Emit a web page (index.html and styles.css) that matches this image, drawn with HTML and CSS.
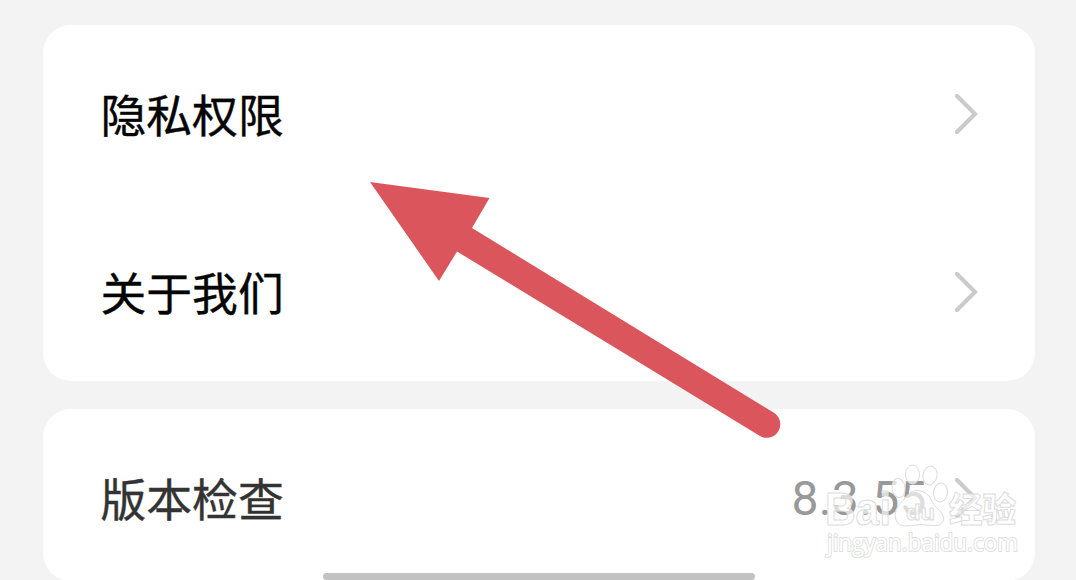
FILE: index.html
```html
<!DOCTYPE html>
<html lang="zh-CN">
<head>
<meta charset="utf-8">
<title>设置</title>
<link rel="stylesheet" href="styles.css">
</head>
<body>
<main class="screen">
  <section class="card">
    <div class="row">
      <span class="label">隐私权限</span>
      <svg class="chevron" viewBox="0 0 24 40"><path d="M2 2 20 20 2 38"/></svg>
    </div>
    <div class="row">
      <span class="label">关于我们</span>
      <svg class="chevron" viewBox="0 0 24 40"><path d="M2 2 20 20 2 38"/></svg>
    </div>
  </section>
  <section class="card card-last">
    <div class="row row-version">
      <span class="label label-soft">版本检查</span>
      <span class="version">8.3.55</span>
      <svg class="chevron" viewBox="0 0 24 40"><path d="M2 2 20 20 2 38"/></svg>
    </div>
  </section>
</main>
<div class="home-bar"></div>
<svg class="arrow" viewBox="0 0 1076 580">
  <path d="M370 182 489.500 198 472 228 773.500 412.500A13.500 13.500 0 0 1 760 436L457 251.500 439 281Z"/>
</svg>
<svg class="watermark" viewBox="820 455 210 110">
  <g class="mark">
    <text class="mark-latin" x="825" y="525" textLength="66" lengthAdjust="spacingAndGlyphs">Bai</text>
    <ellipse cx="898.500" cy="488" rx="6.500" ry="9.500" transform="rotate(-8 898.500 488)"/>
    <ellipse cx="912.500" cy="474.500" rx="7" ry="9.500"/>
    <ellipse cx="930" cy="475.500" rx="7" ry="9.500" transform="rotate(10 930 475.500)"/>
    <ellipse cx="940.500" cy="492.500" rx="7" ry="9.500" transform="rotate(8 940.500 492.500)"/>
    <path d="M905 498C909 492 915 489 921 491C930 493 930 500 935 506C941 512 945 516 943 521C940 528 931 525 920 524.500C908 526 899 528 896 520C893 509 899 506 905 498Z"/>
    <text class="mark-du" x="906" y="520" textLength="29" lengthAdjust="spacingAndGlyphs">du</text>
    <text class="mark-han" x="949" y="522" textLength="67" lengthAdjust="spacingAndGlyphs">经验</text>
    <text class="mark-url" x="827" y="551" textLength="191" lengthAdjust="spacingAndGlyphs">jingyan.baidu.com</text>
  </g>
</svg>
</body>
</html>
```
FILE: styles.css
```css
body {
  margin: 0;
  width: 1076px;
  height: 580px;
  overflow: hidden;
  background: #f3f3f3;
  font-family: "Noto Sans CJK SC", sans-serif;
}

.screen {
  display: flex;
  flex-direction: column;
  gap: 28.5px;
  padding: 25px 41px 0 43px;
}

.card {
  box-sizing: border-box;
  background: #fff;
  border-radius: 28px;
}

.card-last {
  height: 172px;
}

.row {
  display: flex;
  align-items: center;
  height: 177.75px;
  padding: 0 56px 0 57.5px;
}

.label {
  flex: 1;
  padding-bottom: 2px;
  color: #050505;
  font-size: 45.8px;
  line-height: 60px;
  -webkit-text-stroke: 0.4px currentColor;
}

.label-soft {
  color: #333;
}

.chevron {
  width: 24px;
  height: 40px;
  fill: none;
  stroke: #cbcbcb;
  stroke-width: 4.2;
  stroke-linecap: round;
}

.version {
  margin-right: 28px;
  padding-top: 2px;
  color: #999;
  font-family: Roboto, sans-serif;
  font-size: 48px;
  line-height: 60px;
  letter-spacing: 0.4px;
}

.arrow {
  position: absolute;
  top: 0;
  left: 0;
  width: 1076px;
  height: 580px;
  fill: #db565c;
}

.home-bar {
  position: absolute;
  top: 573px;
  left: 323px;
  width: 432px;
  height: 7px;
  border-radius: 4px;
  background: #c2c2c2;
}

.watermark {
  position: absolute;
  top: 455px;
  left: 820px;
  width: 210px;
  height: 110px;
}

.mark {
  fill: rgba(255, 255, 255, 0.68);
  stroke: #dcdcdc;
  stroke-width: 1;
}

.mark-latin {
  font: 700 46px "Liberation Sans", sans-serif;
}

.mark-du {
  font: 700 22px "Liberation Sans", sans-serif;
}

.mark-han {
  font: 900 34px "Noto Sans CJK SC", sans-serif;
}

.mark-url {
  font: 400 24px "Open Sans", sans-serif;
  fill: #fff;
  stroke: #dfdfdf;
  stroke-width: 2;
  paint-order: stroke;
}
```
